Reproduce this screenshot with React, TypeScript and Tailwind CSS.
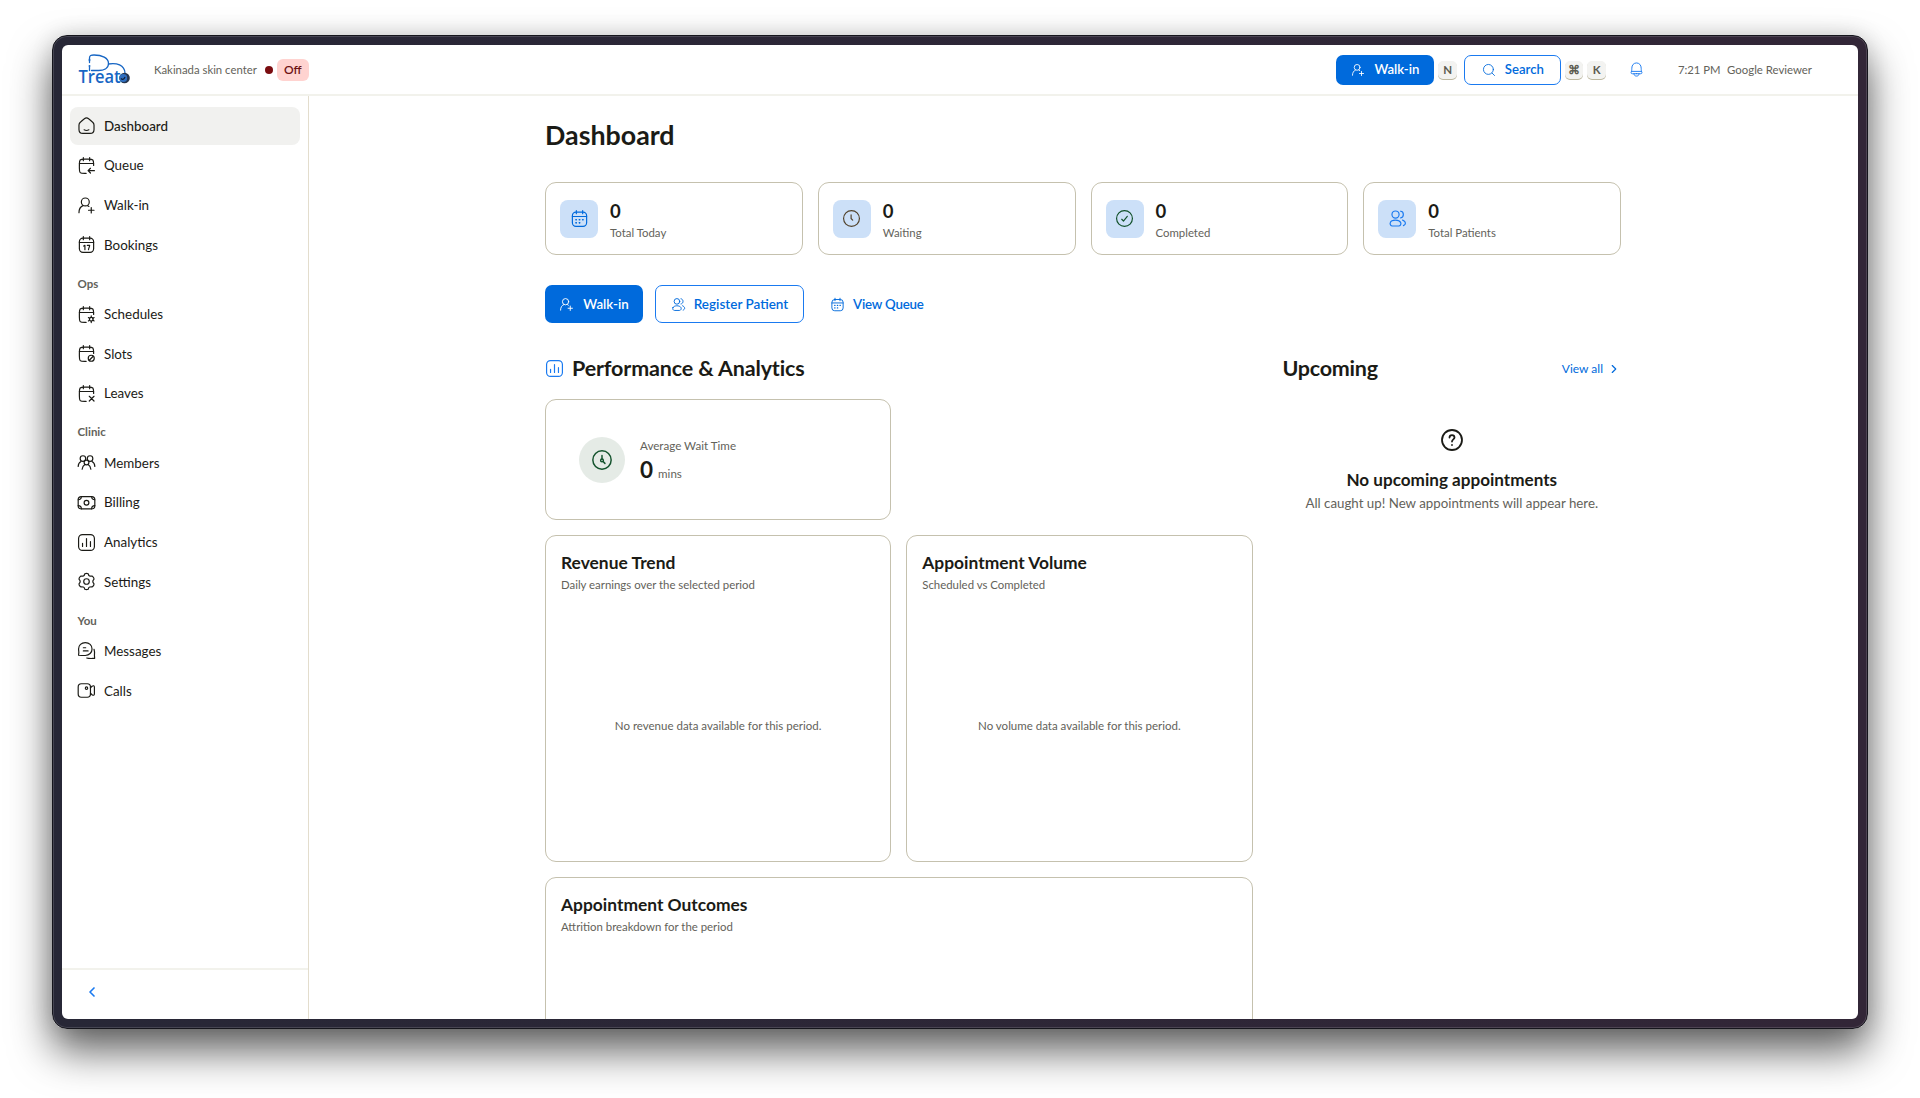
import type { ReactNode } from "react";

const calendarTop = <path d="M16 2v4M8 2v4M3 9.5h18" />;
const calendarOpen = (
  <path d="M21 12v-1c0-3.3 0-5-1-6s-2.7-1-6-1h-4C6.700 4 5 4 4 5s-1 2.700-1 6v4c0 3.300 0 5 1 6s2.700 1 6 1h1.500" />
);
const calendarFull = <rect x="3" y="4" width="18" height="18" rx="4.500" />;

const icons: Record<string, ReactNode> = {
  home: (
    <>
      <path d="M2.500 11.500c0-1.700.6-2.900 2-4l4.800-4c1.700-1.500 3.700-1.500 5.400 0l4.800 4c1.400 1.100 2 2.300 2 4V17c0 3.500-1.500 5-5 5h-9c-3.500 0-5-1.500-5-5z" />
      <path d="M9 17.500c1.800 1 4.200 1 6 0" />
    </>
  ),
  queue: (
    <>
      {calendarTop}
      {calendarOpen}
      <path d="M22 18.500h-7M17 15.500l-3 3 3 3" />
    </>
  ),
  userAdd: (
    <>
      <circle cx="10.500" cy="7.500" r="5" />
      <path d="M2.500 21c0-4.500 2-7.500 5-8.800M13.500 12.200l1.500 1M18 14.500v7M14.500 18h7" />
    </>
  ),
  bookings: (
    <>
      {calendarTop}
      {calendarFull}
      <path d="M8.500 14l1.500-1v5.500M13 13h3c0 2-1.300 3.500-1.500 5.500" />
    </>
  ),
  schedules: (
    <>
      {calendarTop}
      {calendarOpen}
      <circle cx="18" cy="18" r="2.300" />
      <path d="M18 13.800v1.900M18 20.300v1.900M14.400 15.900l1.600 1M20 19.100l1.600 1M14.400 20.100l1.600-1M20 16.900l1.600-1" />
    </>
  ),
  slots: (
    <>
      {calendarTop}
      {calendarOpen}
      <circle cx="18" cy="18" r="3.800" />
      <path d="M15.500 20.500l5-5" />
    </>
  ),
  leaves: (
    <>
      {calendarTop}
      {calendarOpen}
      <path d="M15.500 15.500l6 6M21.500 15.500l-6 6" />
    </>
  ),
  members: (
    <>
      <circle cx="7.500" cy="7" r="3.500" />
      <circle cx="16.500" cy="7" r="3.500" />
      <circle cx="12" cy="12" r="3" />
      <path d="M1.500 17c0-3 1.500-5 3.500-6.200M22.500 17c0-3-1.500-5-3.500-6.200M6.500 20.500c.3-3 1.600-4.800 3.500-5.900M17.500 20.500c-.3-3-1.600-4.800-3.500-5.900" />
    </>
  ),
  billing: (
    <>
      <rect x="1.500" y="4.500" width="21" height="15.500" rx="4" />
      <circle cx="12" cy="12.200" r="3" />
      <path d="M1.500 8.500c2.500 0 4-1.500 4-4M18.500 4.500c0 2.500 1.500 4 4 4M1.500 16c2.500 0 4 1.500 4 4M18.500 20c0-2.500 1.500-4 4-4" />
    </>
  ),
  analytics: (
    <>
      <rect x="2" y="2" width="20" height="20" rx="5" />
      <path d="M7 17v-4M12 17V7M17 17v-6" />
    </>
  ),
  settings: (
    <>
      <circle cx="12" cy="12" r="3.500" />
      <path d="M9.900 2.200Q12 1.200 14.100 2.200Q14.800 4.800 16 5.100Q17.500 5.200 19.400 5.300Q21.400 6.600 21.500 8.900Q19.800 10.800 20 12Q19.800 13.200 21.500 15.100Q21.400 17.400 19.400 18.700Q17.500 18.600 16 18.900Q14.800 19.200 14.100 21.800Q12 22.800 9.900 21.800Q9.200 19.200 8 18.900Q6.500 18.600 4.600 18.700Q2.600 17.400 2.500 15.100Q4.200 13.200 4 12Q4.200 10.800 2.500 8.900Q2.600 6.600 4.600 5.300Q6.500 5.200 8 5.100Q9.200 4.800 9.900 2.200z" />
    </>
  ),
  messages: (
    <>
      <path d="M10.500 2C5.500 2 2 5.500 2 10c0 2 .3 3 .3 4.500 0 1-.3 2-.3 3.500 3 .3 5.500.3 8.500.3 5 0 8.500-3.800 8.500-8.300S15.500 2 10.500 2z" />
      <path d="M8 8.500h3M8 12.500h6M21.500 10.500c1 3 .7 5 .5 7.500l.3 4c-3 0-7 .500-10-.500" />
    </>
  ),
  calls: (
    <>
      <rect x="1.500" y="3.500" width="15.500" height="17" rx="4" />
      <circle cx="12" cy="9" r="1.500" />
      <path d="M17 8.500l2-1.800c1.700-1.300 3-.8 3 1.300v8c0 2.100-1.300 2.600-3 1.300l-2-1.800" />
    </>
  ),
  calendar: (
    <>
      {calendarTop}
      {calendarFull}
      <path d="M7.500 13.500h.5M11.800 13.500h.5M16 13.500h.5M7.500 17.500h.5M11.800 17.500h.5" strokeWidth="2" />
    </>
  ),
  clock: (
    <>
      <circle cx="12" cy="12" r="10" />
      <path d="M11.500 7.500v4.500l2 2" />
    </>
  ),
  timer: (
    <>
      <circle cx="12" cy="12" r="10" />
      <circle cx="12" cy="12.500" r="1.500" />
      <path d="M12 7v4M13.200 13.700l2 2" />
    </>
  ),
  check: (
    <>
      <circle cx="12" cy="12" r="10" />
      <path d="M8.500 13l2.200 2.200 4.800-6" />
    </>
  ),
  patients: (
    <>
      <circle cx="9.500" cy="7" r="4.500" />
      <path d="M3 17c1.500-4 11-4 13 0 1 2.200-.5 4.500-2.500 4.500h-8C3.500 21.500 2 19.200 3 17zM16 2.800c4.500.4 4.500 8 0 8.400M18.500 14c4.500 2 4.500 5.500 1 7" />
    </>
  ),
  search: (
    <>
      <circle cx="11" cy="11" r="8.500" />
      <path d="M17.300 17.300L21.500 21.500" />
    </>
  ),
  bell: (
    <>
      <path d="M5 18.800c-1.400 0-2-1-1.600-2.200C4.200 14.500 4.500 13 4.500 10c0-5 3-8.500 7.500-8.500s7.500 3.500 7.500 8.500c0 3 .3 4.500 1.100 6.600.4 1.200-.2 2.200-1.600 2.200z" />
      <path d="M4 15h16M8 18.800c0 2.500 1.500 3.700 4 3.700s4-1.200 4-3.700M11.700 18.500h.6" />
    </>
  ),
  help: (
    <>
      <circle cx="12" cy="12" r="10" />
      <path d="M9.500 9.500c0-3.300 5-3.300 5 0 0 1.700-2.500 2-2.500 4M12 17v.1" />
    </>
  ),
  left: <path d="M15 6l-6 6 6 6" />,
  right: <path d="M9 6l6 6-6 6" />,
};

function Icon({ name, className, stroke = 1.5 }: { name: string; className: string; stroke?: number }) {
  return (
    <svg
      viewBox="0 0 24 24"
      fill="none"
      stroke="currentColor"
      strokeWidth={stroke}
      strokeLinecap="round"
      strokeLinejoin="round"
      className={`shrink-0 ${className}`}
    >
      {icons[name]}
    </svg>
  );
}

const navGroups = [
  {
    title: "",
    items: [
      { label: "Dashboard", icon: "home", active: true },
      { label: "Queue", icon: "queue" },
      { label: "Walk-in", icon: "userAdd" },
      { label: "Bookings", icon: "bookings" },
    ],
  },
  {
    title: "Ops",
    items: [
      { label: "Schedules", icon: "schedules" },
      { label: "Slots", icon: "slots" },
      { label: "Leaves", icon: "leaves" },
    ],
  },
  {
    title: "Clinic",
    items: [
      { label: "Members", icon: "members" },
      { label: "Billing", icon: "billing" },
      { label: "Analytics", icon: "analytics" },
      { label: "Settings", icon: "settings" },
    ],
  },
  {
    title: "You",
    items: [
      { label: "Messages", icon: "messages" },
      { label: "Calls", icon: "calls" },
    ],
  },
];

const stats = [
  { label: "Total Today", icon: "calendar", color: "text-[#006adc]" },
  { label: "Waiting", icon: "clock", color: "text-[#54452f]" },
  { label: "Completed", icon: "check", color: "text-[#14532d]" },
  { label: "Total Patients", icon: "patients", color: "text-[#1a7af0]" },
];

function Logo() {
  return (
    <svg viewBox="0 0 54 34" className="h-[34px] w-[54px]">
      <text
        x="0.500"
        y="29.800"
        fontFamily="Open Sans"
        fontWeight="600"
        fontSize="18"
        fill="#1766c4"
        textLength="42"
        lengthAdjust="spacingAndGlyphs"
      >
        Treat
      </text>
      <g fill="none" stroke="#1766c4" strokeWidth="1.300" strokeLinecap="round">
        <path d="M11.500 17.500V14M11.500 9.500V5C11.500 2.500 13 2 16 2c8 0 14.500 3 14.500 8.500 0 5-5 7-10 7h-7" />
        <path d="M30.500 11c8-1.500 16 1 16.500 9" />
      </g>
      <circle cx="11.500" cy="7" r="1" fill="#1766c4" />
      <circle cx="11.500" cy="13" r="1" fill="#1766c4" />
      <circle cx="46.500" cy="25" r="5.300" fill="#26364f" />
      <circle cx="45.300" cy="25" r="3.900" fill="#2f6fc0" />
      <path d="M43 25.500c1.500 1.500 3 1 4-1.500" fill="none" stroke="#10203a" strokeWidth="1.200" />
    </svg>
  );
}

function Kbd({ children }: { children: ReactNode }) {
  return (
    <kbd className="flex h-[18px] w-[18.500px] items-center justify-center rounded-[5px] bg-[#f3f3f1] font-[Lato,sans-serif] text-[11.500px] font-bold text-[#5c5b50] shadow-[0_1px_0_#bdb8a0]">
      {children}
    </kbd>
  );
}

function ChartCard({ title, subtitle, empty, className }: { title: string; subtitle: string; empty?: string; className: string }) {
  return (
    <div className={`flex flex-col rounded-[11px] border border-[#c5c1ae] px-[15px] pt-4 ${className}`}>
      <h3 className="text-[17.400px] leading-[22px] font-bold">{title}</h3>
      <p className="mt-[2px] text-[11.400px] leading-[17px] text-[#63625a]">{subtitle}</p>
      {empty && (
        <p className="mt-[124px] text-center text-[11.500px] leading-[17px] text-[#63625a]">{empty}</p>
      )}
    </div>
  );
}

export default function App() {
  return (
    <div className="h-[1098px] w-[1920px] overflow-hidden bg-white pt-[35px] pl-[52px] font-[Lato,sans-serif] text-[#1b1b16]">
      <div className="h-[994px] w-[1816px] rounded-[15px] border border-[#15151c] bg-linear-to-r from-[#272736] to-[#322637] p-[9px] shadow-[inset_0_0_0_1px_rgba(255,255,255,0.14),0_22px_42px_rgba(0,0,0,0.62),0_0_22px_rgba(0,0,0,0.12)]">
        <div className="flex h-full flex-col overflow-hidden rounded-[6px] bg-white">
          {/* Top bar */}
          <header className="flex h-[51px] shrink-0 items-center border-b-2 border-[#f2f2ec] pr-[46px] pl-4">
            <Logo />
            <span className="ml-[22px] pt-px text-[11.350px] text-[#63625a]">Kakinada skin center</span>
            <span className="ml-2 h-2 w-2 rounded-full bg-[#7a0c10]" />
            <span className="ml-1 flex h-[22px] w-8 items-center justify-center rounded-[6px] bg-[#ffd3d0] text-[12px] font-semibold text-[#6d1214]">
              Off
            </span>
            <div className="ml-auto flex items-center">
              <button className="flex h-[30px] w-[98px] items-center justify-center gap-[9px] rounded-[7px] bg-[#006adc] pt-px text-[13.200px] font-semibold text-white">
                <Icon name="userAdd" className="h-[14px] w-[14px]" />
                Walk-in
              </button>
              <div className="ml-1">
                <Kbd>N</Kbd>
              </div>
              <button className="ml-[7.500px] flex h-[30px] w-[97px] items-center justify-center gap-[9px] rounded-[7px] border border-[#1a7af0] pt-px text-[13.200px] font-semibold text-[#006adc]">
                <Icon name="search" className="h-[14px] w-[14px]" />
                Search
              </button>
              <div className="ml-[3.500px] flex gap-1">
                <Kbd>⌘</Kbd>
                <Kbd>K</Kbd>
              </div>
              <Icon name="bell" className="ml-[23px] h-[15px] w-[15px] text-[#1a7af0]" />
              <span className="ml-[34px] pt-px text-[11.300px] text-[#63625a]">7:21 PM</span>
              <span className="ml-[6.500px] pt-px text-[11.400px] text-[#63625a]">Google Reviewer</span>
            </div>
          </header>

          <div className="flex min-h-0 flex-1">
            {/* Sidebar */}
            <aside className="flex w-[247px] shrink-0 flex-col border-r border-[#e3ddcd]">
              <nav className="flex-1 px-2 pt-[11px]">
                {navGroups.map((group) => (
                  <div key={group.title}>
                    {group.title && (
                      <p className="h-[29.500px] pt-[10px] pl-[7.500px] text-[11.500px] leading-[15px] font-bold text-[#63625a]">
                        {group.title}
                      </p>
                    )}
                    {group.items.map((item) => (
                      <a
                        key={item.label}
                        className={`mb-[2px] flex h-[37.700px] items-center gap-2 rounded-[8px] pl-[7px] text-[13.400px] ${
                          item.active ? "bg-[#f1f1ef] font-medium" : ""
                        }`}
                      >
                        <Icon name={item.icon} className="h-[19px] w-[19px]" />
                        {item.label}
                      </a>
                    ))}
                  </div>
                ))}
              </nav>
              <div className="flex h-[51px] items-center border-t-2 border-[#f2f2ec] pb-[5px] pl-[22px]">
                <Icon name="left" className="h-4 w-4 text-[#1a7af0]" stroke={2.5} />
              </div>
            </aside>

            {/* Content */}
            <main className="min-w-0 flex-1 overflow-hidden">
              <div className="ml-[236px] w-[1076px] pt-[22px]">
                <h1 className="text-[26.800px] leading-[34px] font-bold">Dashboard</h1>

                <div className="mt-[30px] grid grid-cols-4 gap-[15px]">
                  {stats.map((stat) => (
                    <div key={stat.label} className="flex h-[73px] items-center rounded-[11px] border border-[#c5c1ae] pl-[14px]">
                      <div className={`flex h-[38px] w-[38px] items-center justify-center rounded-[8px] bg-[#cce0f8] ${stat.color}`}>
                        <Icon name={stat.icon} className="h-[19px] w-[19px]" />
                      </div>
                      <div className="ml-3 pt-px">
                        <p className="text-[18.500px] leading-[26px] font-bold">0</p>
                        <p className="text-[11.400px] leading-[17px] text-[#63625a]">{stat.label}</p>
                      </div>
                    </div>
                  ))}
                </div>

                <div className="mt-[30px] flex text-[13.300px] font-semibold text-[#006adc]">
                  <button className="flex h-[38px] w-[98px] items-center justify-center gap-[9px] rounded-[7px] bg-[#006adc] pt-px text-white">
                    <Icon name="userAdd" className="h-[15px] w-[15px]" />
                    Walk-in
                  </button>
                  <button className="ml-3 flex h-[38px] w-[149px] items-center justify-center gap-2 rounded-[7px] border border-[#1a7af0] text-[13.500px]">
                    <Icon name="patients" className="h-[15px] w-[15px]" />
                    Register Patient
                  </button>
                  <button className="ml-[26px] flex h-[38px] items-center gap-2 pt-px tracking-[-0.2px]">
                    <Icon name="calendar" className="h-[15px] w-[15px]" />
                    View Queue
                  </button>
                </div>

                <div className="mt-[30px] flex gap-[30px]">
                  <section className="w-[707.500px]">
                    <h2 className="flex h-[30px] items-center gap-2 text-[21.500px] font-bold tracking-[-0.15px]">
                      <Icon name="analytics" className="h-[19px] w-[19px] text-[#1a7af0]" />
                      Performance &amp; Analytics
                    </h2>
                    <div className="mt-[16px] grid grid-cols-2 gap-[15px]">
                      <div className="flex h-[121px] items-center rounded-[11px] border border-[#c5c1ae] pl-[33px]">
                        <div className="flex h-[46px] w-[46px] items-center justify-center rounded-full bg-[#e5ebe6] text-[#14532d]">
                          <Icon name="timer" className="h-[22px] w-[22px]" stroke={1.6} />
                        </div>
                        <div className="mt-[6px] ml-[15px]">
                          <p className="text-[11.600px] leading-[17px] text-[#63625a]">Average Wait Time</p>
                          <p className="flex items-baseline gap-[5px] leading-[31px]">
                            <span className="text-[22.500px] font-bold">0</span>
                            <span className="text-[11.600px] text-[#63625a]">mins</span>
                          </p>
                        </div>
                      </div>
                      <ChartCard
                        className="col-start-1 h-[327px]"
                        title="Revenue Trend"
                        subtitle="Daily earnings over the selected period"
                        empty="No revenue data available for this period."
                      />
                      <ChartCard
                        className="h-[327px]"
                        title="Appointment Volume"
                        subtitle="Scheduled vs Completed"
                        empty="No volume data available for this period."
                      />
                      <ChartCard
                        className="col-span-2 h-[327px]"
                        title="Appointment Outcomes"
                        subtitle="Attrition breakdown for the period"
                      />
                    </div>
                  </section>

                  <section className="flex-1">
                    <div className="flex h-[30px] items-center justify-between">
                      <h2 className="text-[21.500px] font-bold tracking-[-0.25px]">Upcoming</h2>
                      <a className="flex items-center gap-1 pt-[2px] text-[12px] text-[#006adc]">
                        View all
                        <Icon name="right" className="h-[14px] w-[14px]" stroke={2} />
                      </a>
                    </div>
                    <div className="mt-[45px] flex flex-col items-center">
                      <Icon name="help" className="h-6 w-6" stroke={1.8} />
                      <h3 className="mt-[17px] text-[17.100px] leading-[22px] font-bold">No upcoming appointments</h3>
                      <p className="mt-[3px] text-[13.300px] leading-[19px] text-[#63625a]">
                        All caught up! New appointments will appear here.
                      </p>
                    </div>
                  </section>
                </div>
              </div>
            </main>
          </div>
        </div>
      </div>
    </div>
  );
}
